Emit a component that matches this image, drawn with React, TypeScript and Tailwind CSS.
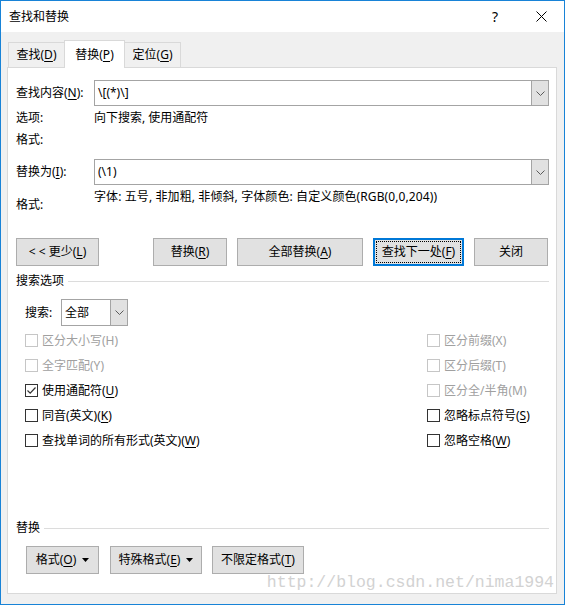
import type { ReactNode } from 'react';

const U = ({ c }: { c: string }) => <span className="underline underline-offset-[2px]">{c}</span>;

function Chevron() {
  return (
    <svg width="9" height="5" viewBox="0 0 9 5" className="block">
      <path d="M0.5 0.5 L4.5 4.5 L8.5 0.5" fill="none" stroke="#5a5a5a" strokeWidth="1" />
    </svg>
  );
}

function Caret() {
  return (
    <svg width="7" height="4" viewBox="0 0 7 4" className="ml-[6px] block">
      <path d="M0 0 H7 L3.5 4 Z" fill="#000" />
    </svg>
  );
}

function Combo({ value, className }: { value: string; className: string }) {
  return (
    <div className={`flex h-[26px] border border-[#a4a4a4] bg-white ${className}`}>
      <div className="flex-1 pl-[3px] leading-[24px]">{value}</div>
      <div className="flex w-[17px] items-center justify-center border-l border-[#a4a4a4] bg-[#e1e1e1]">
        <Chevron />
      </div>
    </div>
  );
}

function Btn({ children, className, primary }: { children: ReactNode; className: string; primary?: boolean }) {
  if (primary) {
    return (
      <div className={`relative flex h-[28px] items-center justify-center border-2 border-[#0078d7] bg-[#e1e1e1] ${className}`}>
        <div className="absolute inset-[1px] border border-dotted border-black" />
        <span className="relative">{children}</span>
      </div>
    );
  }
  return (
    <div className={`flex h-[28px] items-center justify-center border border-[#adadad] bg-[#e1e1e1] ${className}`}>
      {children}
    </div>
  );
}

function Check({ label, checked, disabled }: { label: ReactNode; checked?: boolean; disabled?: boolean }) {
  return (
    <div className={`flex h-[25px] items-center ${disabled ? 'text-[#a0a0a0]' : 'text-black'}`}>
      <div
        className={`flex h-[13px] w-[13px] items-center justify-center border bg-white ${
          disabled ? 'border-[#c6c6c6]' : 'border-[#333333]'
        }`}
      >
        {checked && (
          <svg width="11" height="11" viewBox="0 0 11 11">
            <path d="M1.5 5.5 L4.2 8.2 L9.5 2.5" fill="none" stroke="#333" strokeWidth="1.2" />
          </svg>
        )}
      </div>
      <span className="ml-[4px]">{label}</span>
    </div>
  );
}

function Section({ title, className }: { title: string; className: string }) {
  return (
    <div className={`flex h-[16px] items-center ${className}`}>
      <span className="leading-[16px]">{title}</span>
      <div className="ml-[4px] h-px flex-1 bg-[#dcdcdc]" />
    </div>
  );
}

export default function App() {
  return (
    <div className="flex h-[605px] w-[565px] flex-col border border-[#1883d7] bg-[#f0f0f0] font-['Noto_Sans','Noto_Sans_CJK_SC',sans-serif] text-[12px] text-black">
      {/* title bar */}
      <div className="flex h-[31px] items-center bg-white pl-[8px]">
        <span className="flex-1">查找和替换</span>
        <span className="mr-[38px] text-[14px]">?</span>
        <svg width="11" height="11" viewBox="0 0 11 11" className="mr-[17px]">
          <path d="M0.5 0.5 L10.5 10.5 M10.5 0.5 L0.5 10.5" stroke="#000" strokeWidth="1" />
        </svg>
      </div>

      {/* tabs */}
      <div className="flex h-[35px] items-end pl-[7px]">
        <div className="flex h-[25px] w-[57px] items-center justify-center border border-b-0 border-[#d9d9d9] bg-[#f0f0f0]">
          查找(<U c="D" />)
        </div>
        <div className="relative z-10 -mb-px -ml-px flex h-[28px] w-[61px] items-start justify-center border border-b-0 border-[#d9d9d9] bg-white pt-[5px]">
          替换(<U c="P" />)
        </div>
        <div className="-ml-px flex h-[25px] w-[57px] items-center justify-center border border-b-0 border-[#d9d9d9] bg-[#f0f0f0]">
          定位(<U c="G" />)
        </div>
      </div>

      {/* panel */}
      <div className="relative ml-[6px] flex h-[527px] w-[550px] flex-col border border-[#d9d9d9] bg-white pl-[8px] pr-[7px]">
        <div className="mt-[12px] flex items-center">
          <span className="w-[78px]">查找内容(<U c="N" />):</span>
          <Combo value="\[(*)\]" className="flex-1" />
        </div>
        <div className="mt-[2px] flex h-[20px] items-center">
          <span className="w-[78px]">选项:</span>
          <span>向下搜索, 使用通配符</span>
        </div>
        <div className="mt-[2px] flex h-[20px] items-center">
          <span className="w-[78px]">格式:</span>
        </div>

        <div className="mt-[9px] flex items-center">
          <span className="w-[78px]">替换为(<U c="I" />):</span>
          <Combo value="(\1)" className="flex-1" />
        </div>
        <div className="mt-[2px] flex">
          <span className="mt-[8px] w-[78px] leading-[20px]">格式:</span>
          <span className="leading-[20px] tracking-[0.1px]">字体: 五号, 非加粗, 非倾斜, 字体颜色: 自定义颜色(RGB(0,0,204))</span>
        </div>

        <div className="mt-[23px] flex">
          <Btn className="w-[83px]">
            &lt; &lt; 更少(<U c="L" />)
          </Btn>
          <Btn className="ml-[54px] w-[74px]">
            替换(<U c="R" />)
          </Btn>
          <Btn className="ml-[10px] w-[126px]">
            全部替换(<U c="A" />)
          </Btn>
          <Btn primary className="ml-[10px] w-[91px]">
            查找下一处(<U c="F" />)
          </Btn>
          <Btn className="ml-[10px] w-[74px]">关闭</Btn>
        </div>

        <Section title="搜索选项" className="mt-[7px]" />

        <div className="ml-[9px] mt-[10px] flex items-center">
          <span className="w-[36px]">搜索:</span>
          <div className="flex h-[27px] w-[67px] border border-[#a4a4a4] bg-white">
            <div className="flex-1 pl-[3px] leading-[25px]">全部</div>
            <div className="flex w-[17px] items-center justify-center border-l border-[#a4a4a4] bg-[#e1e1e1]">
              <Chevron />
            </div>
          </div>
        </div>

        <div className="ml-[9px] mt-[2px] flex">
          <div className="w-[402px]">
            <Check disabled label="区分大小写(H)" />
            <Check disabled label="全字匹配(Y)" />
            <Check checked label={<>使用通配符(<U c="U" />)</>} />
            <Check label={<>同音(英文)(<U c="K" />)</>} />
            <Check label={<>查找单词的所有形式(英文)(<U c="W" />)</>} />
          </div>
          <div>
            <Check disabled label="区分前缀(X)" />
            <Check disabled label="区分后缀(T)" />
            <Check disabled label="区分全/半角(M)" />
            <Check label={<>忽略标点符号(<U c="S" />)</>} />
            <Check label={<>忽略空格(<U c="W" />)</>} />
          </div>
        </div>

        <Section title="替换" className="mt-[67px]" />

        <div className="mt-[10px] flex">
          <Btn className="ml-[10px] w-[73px]">
            格式(<U c="O" />)
            <Caret />
          </Btn>
          <Btn className="ml-[11px] w-[92px]">
            特殊格式(<U c="E" />)
            <Caret />
          </Btn>
          <Btn className="ml-[10px] w-[92px]">
            不限定格式(<U c="T" />)
          </Btn>
        </div>

        <div className="pointer-events-none absolute bottom-[1px] right-[2px] font-['Liberation_Mono',monospace] text-[16.5px] leading-[18px] text-[#d2d2d2] [text-shadow:0_0_1px_#fff]">
          http://blog.csdn.net/nima1994
        </div>
      </div>
    </div>
  );
}
